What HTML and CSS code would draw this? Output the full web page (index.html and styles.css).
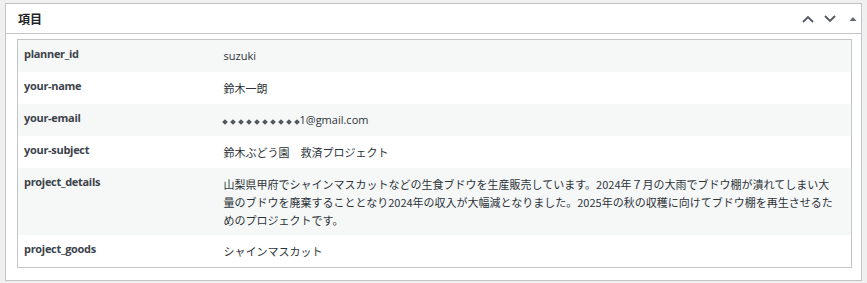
FILE: index.html
```html
<!DOCTYPE html>
<html lang="ja">
<head>
<meta charset="utf-8">
<title>項目</title>
<link rel="stylesheet" href="styles.css">
</head>
<body>
<div class="postbox">
  <div class="postbox-header">
    <h2 class="postbox-title">項目</h2>
    <div class="handle-actions">
      <button class="handle-btn" aria-label="上へ移動">
        <svg width="12" height="8" viewBox="0 0 12 8"><path d="M1 7 L6 2 L11 7" fill="none" stroke="#50575e" stroke-width="1.8"/></svg>
      </button>
      <button class="handle-btn" aria-label="下へ移動">
        <svg width="12" height="8" viewBox="0 0 12 8"><path d="M1 1 L6 6 L11 1" fill="none" stroke="#50575e" stroke-width="1.8"/></svg>
      </button>
      <button class="handle-btn handle-toggle" aria-label="パネルを切り替え">
        <svg width="8" height="6" viewBox="0 0 8 6"><path d="M0.5 5 L4 1 L7.5 5 Z" fill="#646970"/></svg>
      </button>
    </div>
  </div>
  <div class="inside">
    <table class="fields">
      <tbody>
        <tr><th>planner_id</th><td class="latin">suzuki</td></tr>
        <tr><th>your-name</th><td>鈴木一朗</td></tr>
        <tr><th>your-email</th><td class="latin"><span class="mask"><i></i><i></i><i></i><i></i><i></i><i></i><i></i><i></i><i></i><i></i></span>1@gmail.com</td></tr>
        <tr><th>your-subject</th><td>鈴木ぶどう園　救済プロジェクト</td></tr>
        <tr><th>project_details</th><td>山梨県甲府でシャインマスカットなどの生食ブドウを生産販売しています。2024年７月の大雨でブドウ棚が潰れてしまい大<br>量のブドウを廃棄することとなり2024年の収入が大幅減となりました。2025年の秋の収穫に向けてブドウ棚を再生させるた<br>めのプロジェクトです。</td></tr>
        <tr><th>project_goods</th><td>シャインマスカット</td></tr>
      </tbody>
    </table>
  </div>
</div>
</body>
</html>
```

FILE: styles.css
```css
html, body {
  margin: 0;
  padding: 0;
  background: #f0f0f1;
}

body {
  font-family: "Open Sans", "Noto Sans CJK JP", sans-serif;
  color: #2c3338;
}

.postbox {
  box-sizing: border-box;
  width: 857px;
  height: 278px;
  margin: 3px 0 0 5px;
  border: 1px solid #c3c4c7;
  background: #fff;
  display: flex;
  flex-direction: column;
}

.postbox-header {
  height: 29px;
  border-bottom: 1px solid #c3c4c7;
  display: flex;
  align-items: center;
  justify-content: space-between;
}

.postbox-title {
  margin: 0;
  padding-left: 12px;
  font-family: "Noto Sans CJK JP", sans-serif;
  font-size: 12px;
  font-weight: 700;
  line-height: 29px;
  color: #1d2327;
}

.handle-actions {
  display: flex;
  height: 29px;
}

.handle-btn {
  width: 22px;
  height: 29px;
  padding: 0;
  margin: 0;
  border: 0;
  background: transparent;
  display: flex;
  align-items: center;
  justify-content: center;
}

.handle-toggle {
  width: 20px;
  padding-left: 4px;
  box-sizing: border-box;
}

.inside {
  padding: 5px 9px 12px 11px;
}

.fields {
  width: 835px;
  border: 1px solid #c3c4c7;
  border-collapse: collapse;
  border-spacing: 0;
  table-layout: fixed;
}

.fields tr:nth-child(odd) {
  background: #f6f7f7;
}

.fields th {
  width: 200px;
  box-sizing: border-box;
  padding: 5px 6px 6px 6px;
  text-align: left;
  vertical-align: top;
  font-family: "Open Sans", "Noto Sans CJK JP", sans-serif;
  font-size: 11px;
  font-weight: 700;
  letter-spacing: -0.3px;
  line-height: 18px;
  color: #3c434a;
}

.fields td {
  padding: 7px 6px 7px 6px;
  vertical-align: top;
  font-family: "Noto Sans CJK JP", sans-serif;
  font-size: 11px;
  line-height: 18px;
  color: #2c3338;
  white-space: nowrap;
}

.fields td.latin {
  font-family: "Open Sans", "Noto Sans CJK JP", sans-serif;
}

.fields tr:nth-child(5) td {
  padding-bottom: 6px;
}

.mask {
  display: inline-block;
  vertical-align: middle;
  margin-top: -3px;
  margin-left: -1px;
}

.mask i {
  display: inline-block;
  width: 4px;
  height: 4px;
  margin-right: 4px;
  background: #50575e;
  transform: rotate(45deg);
}

.mask i:last-child {
  margin-right: 1px;
}
```
